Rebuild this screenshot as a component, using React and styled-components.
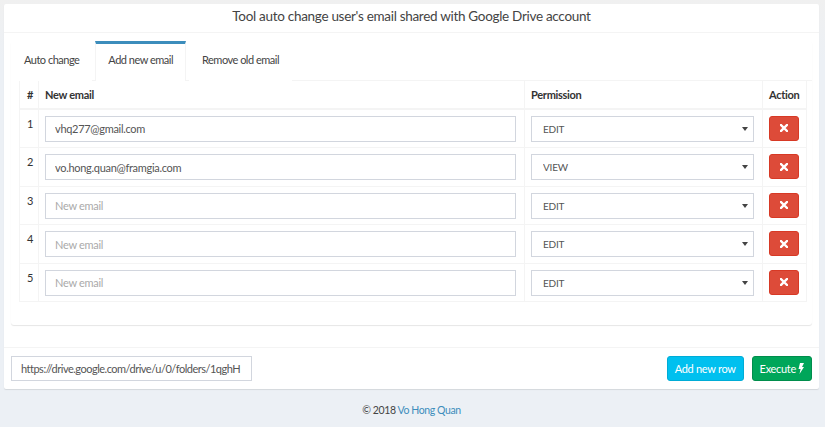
import React from 'react';
import styled, { createGlobalStyle } from 'styled-components';

const rows = [
  { email: 'vhq277@gmail.com', permission: 'EDIT' },
  { email: 'vo.hong.quan@framgia.com', permission: 'VIEW' },
  { email: '', permission: 'EDIT' },
  { email: '', permission: 'EDIT' },
  { email: '', permission: 'EDIT' }
];

const TimesIcon = () => (
  <svg width="8" height="8" viewBox="0 0 8 8">
    <path d="M1 1 L7 7 M7 1 L1 7" stroke="#fff" strokeWidth="2.4" strokeLinecap="square" />
  </svg>
);

const BoltIcon = () => (
  <svg width="6" height="11" viewBox="0 0 6 11">
    <path d="M2 0 H6 L4 4 H6 L1.5 11 L2.6 6 H0.5 Z" fill="#fff" />
  </svg>
);

export default () => (
  <>
    <GlobalStyle />
    <Page>
      <Box>
        <BoxHeader>
          <Title>Tool auto change user's email shared with Google Drive account</Title>
        </BoxHeader>
        <BoxBody>
          <TabsCard>
            <TabNav>
              <Tab>Auto change</Tab>
              <Tab active>Add new email</Tab>
              <Tab>Remove old email</Tab>
            </TabNav>
            <TabContent>
              <Table>
                <colgroup>
                  <col style={{ width: 19 }} />
                  <col style={{ width: 486 }} />
                  <col style={{ width: 238 }} />
                  <col style={{ width: 44 }} />
                </colgroup>
                <thead>
                  <tr>
                    <Th>#</Th>
                    <Th>New email</Th>
                    <Th>Permission</Th>
                    <Th>Action</Th>
                  </tr>
                </thead>
                <tbody>
                  {rows.map((row, i) => (
                    <tr key={i}>
                      <NumCell>{i + 1}</NumCell>
                      <Td>
                        <EmailInput defaultValue={row.email} placeholder="New email" />
                      </Td>
                      <Td>
                        <SelectWrap>
                          <Select defaultValue={row.permission}>
                            <option>EDIT</option>
                            <option>VIEW</option>
                          </Select>
                        </SelectWrap>
                      </Td>
                      <Td>
                        <DeleteBtn>
                          <TimesIcon />
                        </DeleteBtn>
                      </Td>
                    </tr>
                  ))}
                </tbody>
              </Table>
            </TabContent>
          </TabsCard>
        </BoxBody>
        <BoxFooter>
          <UrlInput defaultValue="https://drive.google.com/drive/u/0/folders/1qghH" />
          <Actions>
            <Button color="#00c0ef" border="#00acd6">Add new row</Button>
            <Button color="#00a65a" border="#008d4c">
              Execute <BoltIcon />
            </Button>
          </Actions>
        </BoxFooter>
      </Box>
      <PageFooter>
        © 2018 <FooterLink>Vo Hong Quan</FooterLink>
      </PageFooter>
    </Page>
  </>
);

const GlobalStyle = createGlobalStyle`
  * {
    box-sizing: border-box;
  }

  body {
    margin: 0;
    background: #ecf0f5;
    font-family: Lato, "Liberation Sans", sans-serif;
    font-size: 11px;
    letter-spacing: -0.3px;
    color: #333;
  }
`;

const Page = styled.div`
  display: flex;
  flex-direction: column;
  height: 427px;
  padding: 4px 6px 0 4px;
  background: linear-gradient(#f0f0f0, #ecf0f5 60px);
`;

const Box = styled.div`
  display: flex;
  flex-direction: column;
  background: #fff;
  border-radius: 2px;
  box-shadow: 0 1px 1px rgba(0, 0, 0, 0.1);
`;

const BoxHeader = styled.div`
  display: flex;
  justify-content: center;
  height: 29px;
  padding-top: 4px;
  border-bottom: 1px solid #f4f4f4;
`;

const Title = styled.h3`
  margin: 0;
  font-size: 13.5px;
  line-height: 16px;
  font-weight: 400;
  color: #444;
`;

const BoxBody = styled.div`
  padding: 8px 7px 22px;
`;

const TabsCard = styled.div`
  background: #fff;
  box-shadow: 0 1px 1px rgba(0, 0, 0, 0.1);
  border-radius: 3px;
`;

const TabNav = styled.ul`
  display: flex;
  gap: 3px;
  margin: 0;
  padding: 0;
  list-style: none;
  border-bottom: 1px solid #f4f4f4;
`;

const Tab = styled.li`
  display: flex;
  align-items: center;
  height: 40px;
  padding: 0 12px 6px;
  border-top: 3px solid ${props => (props.active ? '#3c8dbc' : 'transparent')};
  border-left: 1px solid ${props => (props.active ? '#f4f4f4' : 'transparent')};
  border-right: 1px solid ${props => (props.active ? '#f4f4f4' : 'transparent')};
  margin-bottom: -1px;
  background: #fff;
  color: #444;
  letter-spacing: -0.5px;
  cursor: pointer;
`;

const TabContent = styled.div`
  padding: 0 6px 23px 8px;
`;

const Table = styled.table`
  width: 787px;
  table-layout: fixed;
  border-collapse: collapse;
  border: 1px solid #f4f4f4;
  margin-top: -1px;
`;

const Th = styled.th`
  height: 28px;
  padding: 1px 6px 0;
  text-align: left;
  font-weight: 700;
  color: #333;
  border: 1px solid #f4f4f4;
  border-bottom-width: 2px;

  &:first-child {
    padding-left: 7px;
  }
`;

const Td = styled.td`
  padding: 6px 8px 5.5px 6px;
  border: 1px solid #f4f4f4;
  vertical-align: top;
`;

const NumCell = styled(Td)`
  padding: 8px 0 0 7px;
  line-height: 12px;
`;

const EmailInput = styled.input`
  display: block;
  width: 100%;
  height: 26px;
  padding: 0 9px;
  border: 1px solid #d2d6de;
  font-family: inherit;
  font-size: 11px;
  letter-spacing: -0.3px;
  color: #555;
  outline: none;

  &::placeholder {
    color: #aaa;
  }
`;

const SelectWrap = styled.div`
  position: relative;

  &::after {
    content: '';
    position: absolute;
    right: 6px;
    top: 11px;
    border-left: 3px solid transparent;
    border-right: 3px solid transparent;
    border-top: 4px solid #444;
  }
`;

const Select = styled.select`
  display: block;
  width: 100%;
  height: 26px;
  padding: 0 11px;
  border: 1px solid #d2d6de;
  border-radius: 0;
  background: #fff;
  appearance: none;
  font-family: inherit;
  font-size: 10px;
  letter-spacing: -0.2px;
  color: #555;
  outline: none;
`;

const DeleteBtn = styled.button`
  display: flex;
  align-items: center;
  justify-content: center;
  width: 30px;
  height: 25px;
  padding: 0;
  border: 1px solid #d73925;
  border-radius: 3px;
  background: #dd4b39;
  cursor: pointer;
`;

const BoxFooter = styled.div`
  display: flex;
  align-items: center;
  justify-content: space-between;
  height: 42px;
  padding: 0 7px;
  border-top: 1px solid #f4f4f4;
`;

const UrlInput = styled.input`
  width: 241px;
  height: 25px;
  padding: 0 6px 0 9px;
  border: 1px solid #d2d6de;
  font-family: inherit;
  font-size: 11px;
  letter-spacing: -0.5px;
  color: #555;
  outline: none;
`;

const Actions = styled.div`
  display: flex;
  gap: 8px;
`;

const Button = styled.button`
  display: flex;
  align-items: center;
  gap: 2px;
  height: 25px;
  padding: 0 7px;
  border: 1px solid ${props => props.border};
  border-radius: 3px;
  background: ${props => props.color};
  color: #fff;
  font-family: inherit;
  font-size: 11px;
  letter-spacing: -0.3px;
  cursor: pointer;
`;

const PageFooter = styled.footer`
  padding-top: 15px;
  text-align: center;
  font-size: 10.5px;
  letter-spacing: -0.4px;
  color: #444;
`;

const FooterLink = styled.a`
  color: #3c8dbc;
  text-decoration: none;
`;
